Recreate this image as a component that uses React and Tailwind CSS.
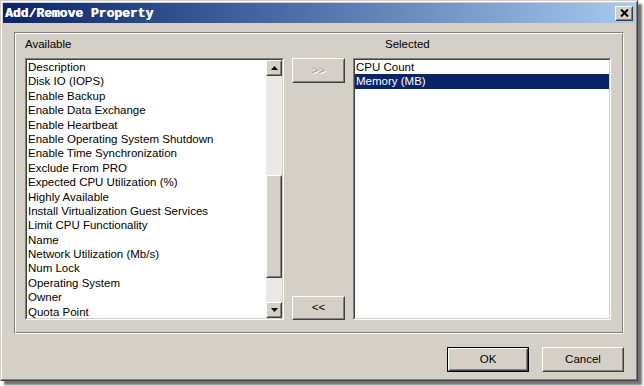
const available = [
  'Description',
  'Disk IO (IOPS)',
  'Enable Backup',
  'Enable Data Exchange',
  'Enable Heartbeat',
  'Enable Operating System Shutdown',
  'Enable Time Synchronization',
  'Exclude From PRO',
  'Expected CPU Utilization (%)',
  'Highly Available',
  'Install Virtualization Guest Services',
  'Limit CPU Functionality',
  'Name',
  'Network Utilization (Mb/s)',
  'Num Lock',
  'Operating System',
  'Owner',
  'Quota Point',
];

const selected = ['CPU Count', 'Memory (MB)'];

const Raised = ({ className = '', children }) => (
  <div className={`border border-t-white border-l-white border-r-[#404040] border-b-[#404040] ${className}`}>
    <div className="w-full h-full border border-t-[#d4d0c8] border-l-[#d4d0c8] border-r-[#808080] border-b-[#808080] flex items-center justify-center">
      {children}
    </div>
  </div>
);

const Sunken = ({ className = '', children }) => (
  <div className={`border border-t-[#808080] border-l-[#808080] border-r-white border-b-white ${className}`}>
    <div className="w-full h-full border border-t-[#404040] border-l-[#404040] border-r-[#d4d0c8] border-b-[#d4d0c8] bg-white flex overflow-hidden">
      {children}
    </div>
  </div>
);

const Arrow = ({ down }) => (
  <svg width="7" height="4" viewBox="0 0 7 4">
    <path d={down ? 'M0 0h7L3.5 4z' : 'M0 4h7L3.5 0z'} fill="#000" />
  </svg>
);

const Scrollbar = () => (
  <div className="w-[16px] h-full flex flex-col">
    <Raised className="w-[16px] h-[16px] shrink-0 bg-[#d4d0c8]">
      <Arrow />
    </Raised>
    <div className="flex-1 flex flex-col bg-[#ebe9e5]">
      <Raised className="w-[16px] h-[103px] mt-[99px] bg-[#d4d0c8]" />
    </div>
    <Raised className="w-[16px] h-[16px] shrink-0 bg-[#d4d0c8]">
      <Arrow down />
    </Raised>
  </div>
);

const Button = ({ label, primary, disabled, className = '' }) => {
  const inner = (
    <Raised className="w-full h-full bg-[#d4d0c8]">
      <span
        className={
          disabled
            ? 'text-[#a0a0a0] [text-shadow:1px_1px_0_#ffffff]'
            : 'text-black'
        }
      >
        {label}
      </span>
    </Raised>
  );
  if (primary) {
    return <div className={`border border-black ${className}`}>{inner}</div>;
  }
  return <div className={className}>{inner}</div>;
};

export default function App() {
  return (
    <div className="w-[644px] h-[386px] bg-white font-['Liberation_Sans',Arial,sans-serif] text-[11.5px] text-black">
      <div className="w-[638px] h-[381px] bg-[#d4d0c8] border border-t-[#d4d0c8] border-l-[#d4d0c8] border-r-[#404040] border-b-[#404040] shadow-[4px_4px_2px_rgba(0,0,0,0.55)]">
        <div className="h-full border border-t-white border-l-white border-r-[#808080] border-b-[#808080] p-px flex flex-col">
          {/* title bar */}
          <div className="h-[20px] shrink-0 flex items-center justify-between pl-[2px] pr-[2px] bg-gradient-to-r from-[#0a246a] to-[#a6caf0]">
            <span className="font-['Liberation_Mono',monospace] font-bold text-[13px] text-white leading-none [text-shadow:0.5px_0_0_#ffffff]">
              Add/Remove Property
            </span>
            <Raised className="w-[18px] h-[15px] bg-[#d4d0c8]">
              <svg width="9" height="8" viewBox="0 0 9 8">
                <path d="M1 0.5L8 7.5M8 0.5L1 7.5" stroke="#000" strokeWidth="2" />
              </svg>
            </Raised>
          </div>

          {/* group box */}
          <div className="ml-[11px] mt-[9px] w-[610px] h-[302px] border border-t-[#808080] border-l-[#808080] border-r-white border-b-white">
            <div className="w-full h-full border border-t-white border-l-white border-r-[#808080] border-b-[#808080] pl-[9px] pr-[11px]">
              <div className="grid grid-cols-[259px_53px_258px] grid-rows-[24px_262px] gap-x-[8px]">
                <div className="leading-[20px]">Available</div>
                <div />
                <div className="leading-[20px] pl-[32px]">Selected</div>

                <Sunken className="h-[262px]">
                  <div className="flex-1 pl-px">
                    {available.map((item) => (
                      <div key={item} className="h-[14.4px] leading-[14.4px] whitespace-nowrap">
                        {item}
                      </div>
                    ))}
                  </div>
                  <Scrollbar />
                </Sunken>

                <div className="flex flex-col justify-between">
                  <Button label=">>" disabled className="h-[25px]" />
                  <Button label="<<" className="h-[24px]" />
                </div>

                <Sunken className="h-[262px]">
                  <div className="flex-1">
                    {selected.map((item, i) => (
                      <div
                        key={item}
                        className={`h-[14.4px] leading-[14.4px] pl-px whitespace-nowrap ${
                          i === 1 ? 'bg-[#0a246a] text-white' : ''
                        }`}
                      >
                        {item}
                      </div>
                    ))}
                  </div>
                </Sunken>
              </div>
            </div>
          </div>

          {/* buttons */}
          <div className="mt-[13px] flex justify-end gap-[13px] mr-[11px]">
            <Button label="OK" primary className="w-[82px] h-[25px]" />
            <Button label="Cancel" className="w-[82px] h-[25px]" />
          </div>
        </div>
      </div>
    </div>
  );
}
